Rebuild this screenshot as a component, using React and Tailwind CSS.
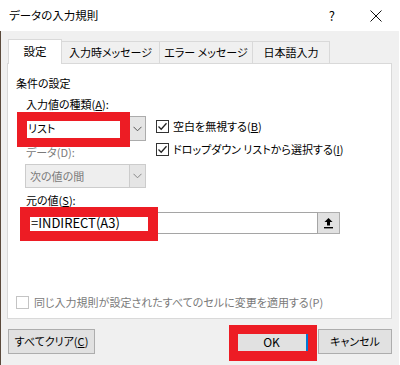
import React from "react";

const RED = "border-[#ed1c24]";

function Chevron({ color = "#555" }) {
  return (
    <svg width="9" height="6" viewBox="0 0 9 6">
      <path d="M0.5 0.8 L4.5 4.8 L8.5 0.8" fill="none" stroke={color} strokeWidth="1" />
    </svg>
  );
}

function CheckBox({ checked, disabled }) {
  return (
    <div
      className={
        "w-[13px] h-[13px] border bg-white flex items-center justify-center " +
        (disabled ? "border-[#c4c4c4]" : "border-[#333]")
      }
    >
      {checked && (
        <svg width="11" height="11" viewBox="0 0 11 11">
          <path d="M1.5 5.5 L4.2 8.2 L9.5 2.2" fill="none" stroke="#222" strokeWidth="1.3" />
        </svg>
      )}
    </div>
  );
}

export default function App() {
  return (
    <div className="w-[400px] h-[365px] overflow-hidden bg-[#f0f0f0] text-[11px] text-black font-['Noto_Sans_CJK_JP','Noto_Sans',sans-serif] [font-feature-settings:'palt'] flex flex-col">
      {/* タイトルバー */}
      <div className="h-[31px] bg-white flex items-center pl-[9px] shrink-0">
        <span className="text-[11.5px]">データの入力規則</span>
        <span className="ml-auto mr-[35px] text-[13px]">?</span>
        <svg width="12" height="12" viewBox="0 0 12 12" className="mr-[18px]">
          <path d="M0.5 0.5 L11.5 11.5 M11.5 0.5 L0.5 11.5" stroke="#111" strokeWidth="1" />
        </svg>
      </div>

      <div className="flex-1 flex flex-col border-l border-[#5b4a3c] border-r border-r-white">
        {/* タブ */}
        <div className="flex items-end h-[25px] mt-[8px] ml-[7px]">
          <div className="relative z-10 w-[54px] h-[25px] bg-white border border-b-0 border-[#d9d9d9] flex items-center justify-center text-[11.5px]">
            設定
          </div>
          <div className="w-[98px] h-[23px] border border-l-0 border-[#d9d9d9] flex items-center justify-center">
            入力時メッセージ
          </div>
          <div className="w-[93px] h-[23px] border border-l-0 border-[#d9d9d9] flex items-center justify-center">
            エラー メッセージ
          </div>
          <div className="w-[77px] h-[23px] border border-l-0 border-[#d9d9d9] flex items-center justify-center">
            日本語入力
          </div>
        </div>

        {/* パネル */}
        <div className="-mt-[1px] ml-[6px] w-[385px] h-[256px] bg-white border border-[#d9d9d9] pt-[11px] pl-[8px]">
          <div className="h-[16px] leading-[16px]">条件の設定</div>

          <div className="flex mt-[1px] pl-[9px]">
            <div className="flex flex-col w-[121px]">
              <div className="h-[24px] flex items-center pl-[1px]">
                入力値の種類(<span className="underline">A</span>):
              </div>
              <div className="relative h-[25px] flex">
                <div className="flex-1 bg-white border border-r-0 border-[#acacac] flex items-center pl-[2px]">
                  リスト
                </div>
                <div className="w-[17px] bg-[#e5e5e5] border border-[#acacac] flex items-center justify-center">
                  <Chevron />
                </div>
                <div className={"absolute -left-[8px] -top-[4px] w-[113px] h-[35px] border-x-[10px] border-y-[9px] " + RED} />
              </div>
              <div className="h-[23px] flex items-center pl-[1px] text-[#7a7a7a]">データ(D):</div>
              <div className="h-[24px] flex">
                <div className="flex-1 bg-[#eeeeee] border border-r-0 border-[#cccccc] flex items-center pl-[4px] text-[#7a7a7a]">
                  次の値の間
                </div>
                <div className="w-[17px] bg-[#e5e5e5] border border-[#cccccc] flex items-center justify-center">
                  <Chevron color="#888" />
                </div>
              </div>
            </div>

            <div className="flex flex-col ml-[10px] mt-[27px]">
              <div className="h-[14px] flex items-center gap-[4px]">
                <CheckBox checked />
                <span>
                  空白を無視する(<span className="underline">B</span>)
                </span>
              </div>
              <div className="h-[14px] mt-[9px] flex items-center gap-[4px]">
                <CheckBox checked />
                <span>
                  ドロップダウン リストから選択する(<span className="underline">I</span>)
                </span>
              </div>
            </div>
          </div>

          <div className="h-[24px] flex items-center pl-[10px]">
            元の値(<span className="underline">S</span>):
          </div>
          <div className="relative flex ml-[9px] h-[22px]">
            <div className="w-[293px] bg-white border border-[#a5a5a5] flex items-center pl-[5px] text-[13px]">
              =INDIRECT(A3)
            </div>
            <div className="w-[22px] bg-[#e1e1e1] border border-l-0 border-[#adadad] flex items-center justify-center">
              <svg width="11" height="12" viewBox="0 0 11 12">
                <path d="M5.5 1 L1.5 5 H4 V8.5 H7 V5 H9.5 Z" fill="#000" />
                <rect x="1" y="10" width="9" height="1.4" fill="#000" />
              </svg>
            </div>
            <div className={"absolute -left-[5px] -top-[5px] w-[138px] h-[34px] border-[10px] " + RED} />
          </div>

          <div className="mt-[62px] h-[13px] flex items-center gap-[5px] text-[#7a7a7a]">
            <CheckBox disabled />
            <span>同じ入力規則が設定されたすべてのセルに変更を適用する(P)</span>
          </div>
        </div>

        {/* ボタン */}
        <div className="flex mt-[10px] ml-[7px] h-[25px]">
          <div className="w-[87px] bg-[#e1e1e1] border border-[#adadad] flex items-center justify-center">
            すべてクリア(<span className="underline">C</span>)
          </div>
          <div className="relative ml-[141px] w-[72px] bg-[#e1e1e1] border border-[#adadad] border-r-2 border-r-[#0078d7] flex items-center justify-center text-[12px]">
            OK
            <div className={"absolute -left-[8px] -top-[5px] w-[88px] h-[36px] border-x-[9px] border-t-[9px] border-b-[10px] " + RED} />
          </div>
          <div className="ml-[10px] w-[74px] bg-[#e1e1e1] border border-[#adadad] flex items-center justify-center">
            キャンセル
          </div>
        </div>
      </div>
    </div>
  );
}
